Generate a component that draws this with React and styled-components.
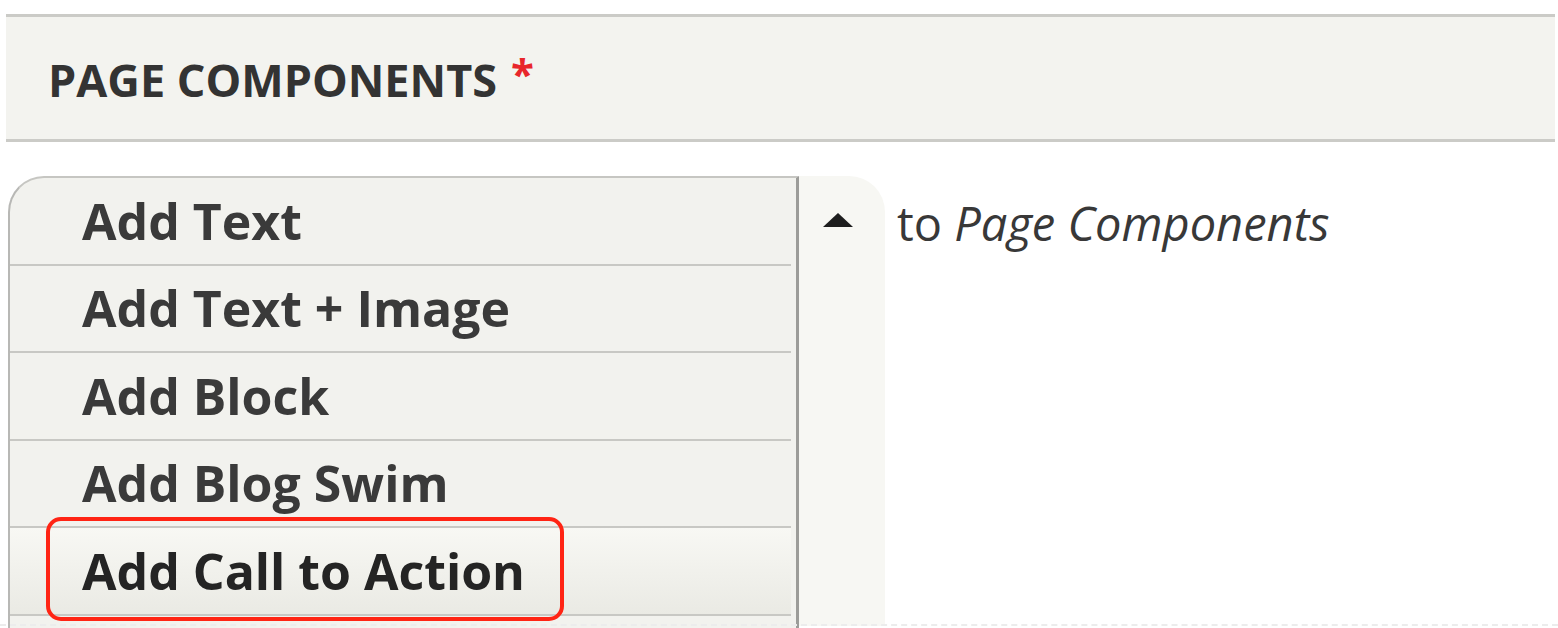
import React from "react";
import styled, { createGlobalStyle } from "styled-components";

const GlobalStyle = createGlobalStyle`
  html, body { margin: 0; padding: 0; background: #ffffff; }
  body { font-family: "Open Sans", "Noto Sans", sans-serif; color: #333; }
`;

const Page = styled.div`
  width: 1558px;
  height: 628px;
  box-sizing: border-box;
  padding: 14px 3px 0 6px;
  overflow: hidden;
  position: relative;
`;

const Header = styled.div`
  height: 122px;
  background: #f3f3ef;
  border-top: 3px solid #cbcbc7;
  border-bottom: 3px solid #cbcbc7;
  display: flex;
  align-items: center;
  padding-left: 42px;
`;

const Title = styled.h2`
  margin: 0;
  font-size: 45px;
  font-weight: 700;
  color: #333;
  line-height: 1;
  padding-top: 2px;
`;

const Required = styled.span`
  color: #e8262b;
  margin-left: 14px;
  font-size: 42px;
  position: relative;
  top: -8px;
`;

const Widget = styled.div`
  display: flex;
  align-items: flex-start;
  margin-top: 34px;
  margin-left: 2px;
  height: 450px;
`;

const List = styled.ul`
  list-style: none;
  margin: 0;
  padding: 0 5px 0 0;
  width: 781px;
  height: 100%;
  background: #f2f2ee;
  border-top: 2px solid #c6c6c2;
  border-left: 2px solid #b8b8b5;
  border-right: 3px solid #9c9c99;
  border-top-left-radius: 36px;
  box-sizing: content-box;
`;

const Item = styled.li`
  position: relative;
  box-sizing: border-box;
  height: 87.5px;
  border-bottom: 2px solid #c8c8c4;
  display: flex;
  align-items: center;
  padding-left: 72px;
  font-size: 50px;
  font-weight: 700;
  color: ${(p) => (p.$active ? "#242424" : "#3a3a3a")};
  background: ${(p) =>
    p.$active ? "linear-gradient(#f8f8f4, #eaeae4)" : "transparent"};
  line-height: 1;
`;

const Ring = styled.span`
  position: absolute;
  left: 36px;
  top: -11px;
  width: 518px;
  height: 104px;
  box-sizing: border-box;
  border: 4px solid #ff2414;
  border-radius: 15px;
  pointer-events: none;
`;

const Side = styled.div`
  width: 86px;
  height: 100%;
  background: #f7f7f3;
  border-top-right-radius: 36px;
  display: flex;
  align-items: flex-start;
  padding: 36px 0 0 23px;
  box-sizing: border-box;
`;

const Caption = styled.div`
  margin-left: 12px;
  margin-top: 24px;
  font-size: 47px;
  color: #383838;
  line-height: 1;

  em {
    font-style: italic;
  }
`;

const Dashes = styled.div`
  position: absolute;
  left: 0;
  right: 0;
  bottom: 2px;
  border-bottom: 2px dashed #ececec;
`;

const items = [
  "Add Text",
  "Add Text + Image",
  "Add Block",
  "Add Blog Swim",
  "Add Call to Action",
];

export default function App() {
  return (
    <Page>
      <GlobalStyle />
      <Header>
        <Title>
          PAGE COMPONENTS<Required>*</Required>
        </Title>
      </Header>
      <Widget>
        <List>
          {items.map((label, i) => {
            const active = i === items.length - 1;
            return (
              <Item key={label} $active={active}>
                {label}
                {active && <Ring />}
              </Item>
            );
          })}
        </List>
        <Side>
          <svg width="32" height="16" viewBox="0 0 32 16">
            <polygon points="16,1 31,15 1,15" fill="#1e1e1e" />
          </svg>
        </Side>
        <Caption>
          to <em>Page Components</em>
        </Caption>
      </Widget>
      <Dashes />
    </Page>
  );
}
